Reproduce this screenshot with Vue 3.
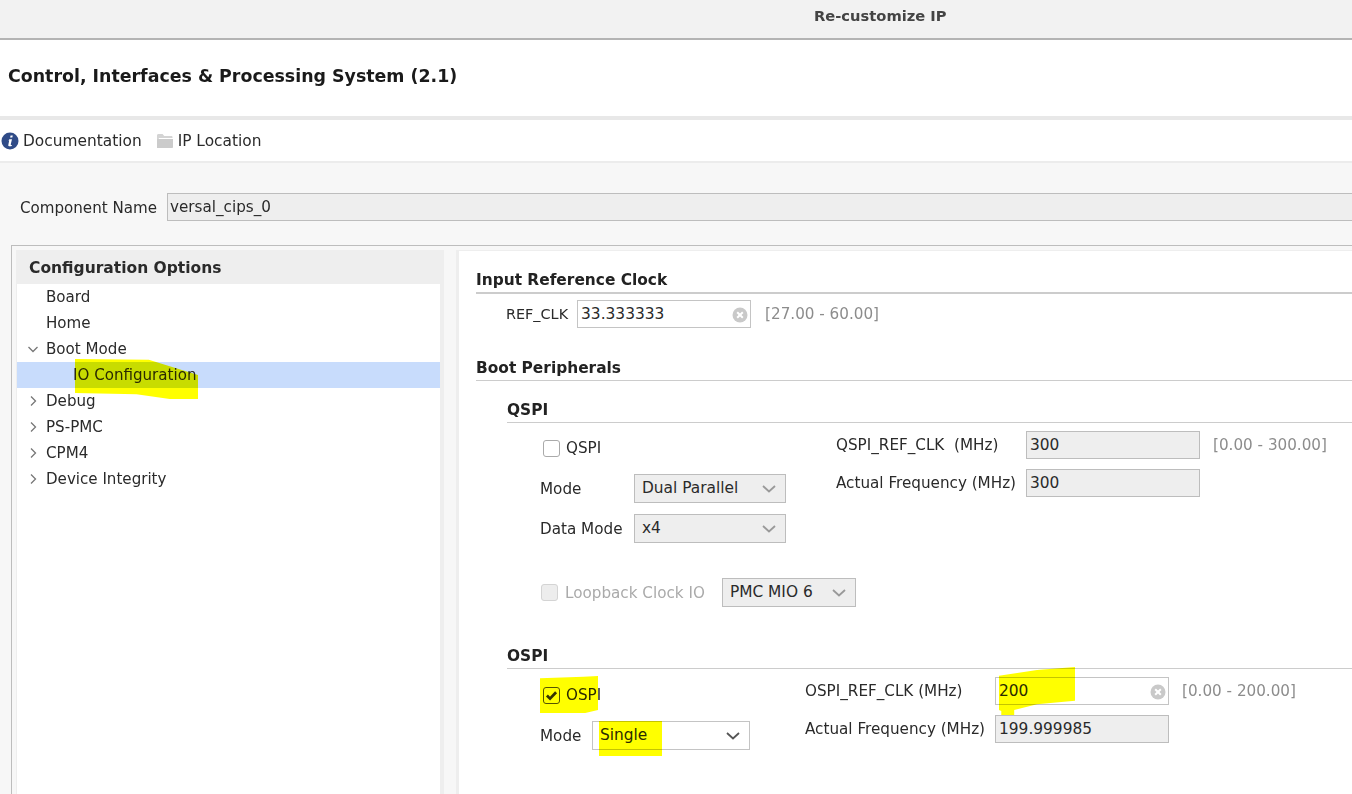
<template>
  <div class="window">
    <header class="titlebar">Re-customize IP</header>
    <div class="heading">Control, Interfaces &amp; Processing System (2.1)</div>
    <nav class="links">
      <span class="link">
        <svg class="link-icon" viewBox="0 0 18 18">
          <circle cx="9" cy="9" r="8.5" fill="#2f4b87" />
          <path d="M9.6 3.4h2.2l-.5 2.2H9.1zM8.4 7.2h2.6L9.7 12.6c-.1.5.3.6 1.2.3l-.2 1c-1.6.7-3.7.7-3.4-1l.9-4.5H7.4z" fill="#fff" />
        </svg>
        Documentation
      </span>
      <span class="link">
        <svg class="link-icon folder" viewBox="0 0 18 16">
          <path d="M1 2.5C1 1.7 1.6 1 2.4 1h4.2l1.6 2h7.4c.5 0 .9.4.9.9V5H3L1 11z" fill="#d4d4d4" />
          <path d="M1 15V7.2C1 6.5 1.5 6 2.2 6H17v8c0 .6-.5 1-1 1z" fill="#cbcbcb" />
        </svg>
        IP Location
      </span>
    </nav>

    <main class="body">
      <div class="name-row">
        <label>Component Name</label>
        <div class="name-input">versal_cips_0</div>
      </div>

      <div class="split">
        <aside class="options">
          <div class="options-title">Configuration Options</div>
          <ul class="tree">
            <li v-for="item in tree" :key="item.label" class="tree-row" :class="{ selected: item.selected, child: item.child }">
              <svg v-if="item.arrow" class="arrow" viewBox="0 0 12 12">
                <path :d="item.arrow === 'open' ? 'M1.5 4l4.5 4.5L10.5 4' : 'M4 1.5L8.5 6 4 10.5'" />
              </svg>
              {{ item.label }}
              <span v-if="item.selected" class="marker mark-tree"></span>
            </li>
          </ul>
        </aside>

        <section class="panel">
          <h3 class="group-title first">Input Reference Clock</h3>
          <div class="ref-row">
            <span class="ref-label">REF_CLK</span>
            <div class="field clearable ref-field">33.333333<span class="clear"><svg viewBox="0 0 16 16"><circle cx="8" cy="8" r="7.5" fill="#c9c9c9" /><path d="M5.2 5.2l5.6 5.6M10.8 5.2l-5.6 5.6" stroke="#fff" stroke-width="2" /></svg></span></div>
            <span class="range">[27.00 - 60.00]</span>
          </div>

          <h3 class="group-title boot">Boot Peripherals</h3>

          <div class="sub">
            <h4 class="sub-title">QSPI</h4>
            <div class="sub-body qspi-body">
              <div class="left-col">
                <div class="check-row">
                  <span class="check"></span>
                  <span>QSPI</span>
                </div>
                <div class="select-row qspi-mode">
                  <span class="select-label">Mode</span>
                  <div class="field select disabled">Dual Parallel<svg class="caret" viewBox="0 0 14 8"><path d="M1 1l6 5.5L13 1" /></svg></div>
                </div>
                <div class="select-row">
                  <span class="select-label">Data Mode</span>
                  <div class="field select disabled">x4<svg class="caret" viewBox="0 0 14 8"><path d="M1 1l6 5.5L13 1" /></svg></div>
                </div>
              </div>
              <div class="freq-col">
                <div class="freq-row">
                  <span class="freq-label">QSPI_REF_CLK&nbsp; (MHz)</span>
                  <div class="field freq-field disabled">300</div>
                  <span class="range wide">[0.00 - 300.00]</span>
                </div>
                <div class="freq-row">
                  <span class="freq-label">Actual Frequency (MHz)</span>
                  <div class="field freq-field disabled">300</div>
                </div>
              </div>
            </div>
            <div class="loopback">
              <span class="check off"></span>
              <span class="muted">Loopback Clock IO</span>
              <div class="field select mio disabled">PMC MIO 6<svg class="caret" viewBox="0 0 14 8"><path d="M1 1l6 5.5L13 1" /></svg></div>
            </div>
          </div>

          <div class="sub ospi">
            <h4 class="sub-title">OSPI</h4>
            <div class="sub-body ospi-body">
              <div class="left-col ospi-left">
                <div class="check-row ospi-check">
                  <span class="check on">
                    <svg viewBox="0 0 14 12"><path d="M2 6l3.4 3.4L12 2.4" /></svg>
                  </span>
                  <span>OSPI</span>
                  <span class="marker mark-check"></span>
                </div>
                <div class="select-row ospi-mode">
                  <span class="select-label short">Mode</span>
                  <div class="field select single">Single<svg class="caret dark" viewBox="0 0 14 8"><path d="M1 1l6 5.5L13 1" /></svg><span class="marker mark-single"></span></div>
                </div>
              </div>
              <div class="freq-col ospi-freq">
                <div class="freq-row">
                  <span class="freq-label">OSPI_REF_CLK (MHz)</span>
                  <div class="field clearable freq-field">200<span class="clear"><svg viewBox="0 0 16 16"><circle cx="8" cy="8" r="7.5" fill="#c9c9c9" /><path d="M5.2 5.2l5.6 5.6M10.8 5.2l-5.6 5.6" stroke="#fff" stroke-width="2" /></svg></span><span class="marker mark-200"></span></div>
                  <span class="range wide">[0.00 - 200.00]</span>
                </div>
                <div class="freq-row">
                  <span class="freq-label">Actual Frequency (MHz)</span>
                  <div class="field freq-field disabled">199.999985</div>
                </div>
              </div>
            </div>
          </div>
        </section>
      </div>
    </main>
  </div>
</template>

<script setup>
const tree = [
  { label: 'Board' },
  { label: 'Home' },
  { label: 'Boot Mode', arrow: 'open' },
  { label: 'IO Configuration', child: true, selected: true },
  { label: 'Debug', arrow: 'closed' },
  { label: 'PS-PMC', arrow: 'closed' },
  { label: 'CPM4', arrow: 'closed' },
  { label: 'Device Integrity', arrow: 'closed' }
];
</script>

<style>
html,
body {
  margin: 0;
  height: 100%;
  overflow: hidden;
  background: #fff;
}
</style>

<style scoped>
.window {
  width: 1352px;
  height: 794px;
  overflow: hidden;
  display: flex;
  flex-direction: column;
  font-family: "DejaVu Sans", sans-serif;
  font-size: 15.2px;
  color: #2a2a2a;
  background: #fff;
}

.titlebar {
  height: 38px;
  flex: none;
  padding-left: 814px;
  line-height: 32px;
  font-size: 14.7px;
  font-weight: 700;
  color: #444;
  background: #f2f2f2;
  border-bottom: 2px solid #b4b4b4;
}

.heading {
  height: 76px;
  flex: none;
  padding-left: 8px;
  line-height: 73px;
  font-size: 17.4px;
  font-weight: 700;
  color: #1a1a1a;
  border-bottom: 4px solid #e8e8e8;
}

.links {
  height: 41px;
  flex: none;
  display: flex;
  align-items: center;
  gap: 14px;
  padding-left: 1px;
  font-size: 15.4px;
  border-bottom: 2px solid #ececec;
}

.link {
  display: flex;
  align-items: center;
  gap: 4px;
}

.link-icon {
  width: 18px;
  height: 18px;
}

.link-icon.folder {
  height: 16px;
}

.body {
  flex: 1;
  min-height: 0;
  padding: 30px 0 0 11px;
  background: #f7f7f7;
}

.name-row {
  display: flex;
  align-items: center;
  height: 28px;
  padding-left: 9px;
  gap: 10px;
  font-size: 15.1px;
}

.name-row label {
  padding-top: 1px;
}

.name-input {
  flex: 1;
  height: 28px;
  box-sizing: border-box;
  padding-left: 2px;
  line-height: 27px;
  font-size: 15.2px;
  background: #eee;
  border: 1px solid #bdbdbd;
  border-right: none;
}

.split {
  display: flex;
  height: 560px;
  margin-top: 24px;
  padding: 4px 0 0 4px;
  gap: 12px;
  border: 1px solid #bdbdbd;
  border-right: none;
  border-bottom: none;
}

.options {
  width: 428px;
  flex: none;
  box-sizing: border-box;
  background: #fff;
  border-right: 4px solid #eee;
  border-left: 1px solid #eee;
}

.options-title {
  height: 34px;
  padding-left: 12px;
  line-height: 36px;
  font-size: 15.5px;
  font-weight: 700;
  background: #eee;
}

.tree {
  margin: 0;
  padding: 0;
  list-style: none;
}

.tree-row {
  position: relative;
  display: flex;
  align-items: center;
  box-sizing: border-box;
  height: 26px;
  padding: 0.5px 0 0 29px;
  font-size: 15.1px;
}

.tree-row.child {
  padding-left: 56px;
}

.tree-row.selected {
  background: #c8dcfc;
}

.arrow {
  position: absolute;
  left: 10px;
  top: 7px;
  width: 12px;
  height: 12px;
  fill: none;
  stroke: #777;
  stroke-width: 1.3;
}

.panel {
  flex: 1;
  min-width: 0;
  padding: 20px 0 0 17px;
  background: #fff;
  border-left: 3px solid #eee;
  border-top: 1px solid #eee;
}

.group-title {
  margin: 0;
  padding-bottom: 2px;
  height: 19px;
  line-height: 19px;
  font-size: 15.4px;
  font-weight: 700;
  color: #222;
  border-bottom: 1px solid #ccc;
}

.group-title.first {
  border-bottom-width: 2px;
}

.group-title.boot {
  margin-top: 31px;
}

.ref-row {
  display: flex;
  align-items: center;
  height: 28px;
  margin-top: 6px;
  padding-left: 30px;
  gap: 9px;
}

.ref-label {
  font-size: 14.4px;
}

.field {
  position: relative;
  box-sizing: border-box;
  height: 28px;
  padding-left: 3px;
  line-height: 27px;
  font-size: 15.4px;
  background: #fff;
  border: 1px solid #c4c4c4;
}

.field.disabled {
  background: #eee;
  border-color: #bdbdbd;
}

.ref-field {
  width: 174px;
  padding-left: 3px;
}

.clear {
  position: absolute;
  right: 2px;
  top: 6px;
  width: 16px;
  height: 16px;
}

.clear svg {
  display: block;
  width: 16px;
  height: 16px;
}

.range {
  margin-left: 5px;
  color: #8c8c8c;
}

.range.wide {
  margin-left: 13px;
}

.sub {
  padding-left: 31px;
}

.sub-title {
  margin: 0;
  margin-top: 20px;
  padding-bottom: 2px;
  height: 19px;
  line-height: 19px;
  font-size: 15.4px;
  font-weight: 700;
  color: #222;
  border-bottom: 1px solid #ccc;
}

.ospi .sub-title {
  margin-top: 40px;
}

.sub-body {
  display: flex;
}

.left-col {
  width: 329px;
  flex: none;
  padding-left: 33px;
  box-sizing: border-box;
}

.check-row {
  position: relative;
  display: flex;
  align-items: center;
  gap: 6px;
  padding-left: 3px;
  height: 26px;
  margin-top: 12px;
}

.check {
  display: flex;
  align-items: center;
  justify-content: center;
  width: 17px;
  height: 17px;
  box-sizing: border-box;
  flex: none;
  border: 1.5px solid #aaa;
  border-radius: 3px;
  background: #fff;
}

.check.off {
  background: #ededed;
  border-color: #d4d4d4;
}

.check.on {
  border-color: #555;
}

.check.on svg {
  width: 13px;
  height: 11px;
  fill: none;
  stroke: #333;
  stroke-width: 3;
}

.select-row {
  display: flex;
  align-items: center;
}

.qspi-mode {
  margin-top: 13px;
  margin-bottom: 11px;
}

.select-label {
  width: 94px;
  flex: none;
}

.select-label.short {
  width: 52px;
}

.select {
  width: 152px;
  height: 29px;
  padding-left: 7px;
  line-height: 27px;
}

.caret {
  position: absolute;
  right: 9px;
  top: 10px;
  width: 14px;
  height: 8px;
  fill: none;
  stroke: #999;
  stroke-width: 1.8;
}

.caret.dark {
  stroke: #555;
}

.freq-col {
  padding-top: 8px;
}

.freq-row {
  display: flex;
  align-items: center;
  height: 28px;
  margin-bottom: 10px;
}

.freq-label {
  width: 190px;
  flex: none;
}

.freq-field {
  width: 174px;
  padding-left: 3px;
}

.loopback {
  display: flex;
  align-items: center;
  height: 29px;
  margin-top: 35px;
  padding-left: 34px;
}

.loopback .muted {
  margin-left: 7px;
  color: #aaa;
}

.mio {
  width: 134px;
  margin-left: 17px;
}

.ospi-left {
  width: 298px;
}

.ospi-freq {
  padding-top: 8px;
}

.ospi-check {
  margin-top: 13px;
}

.ospi-mode {
  margin-top: 13px;
}

.single {
  width: 158px;
}

.marker {
  position: absolute;
  background: #ffff00;
  mix-blend-mode: multiply;
  pointer-events: none;
}

.mark-tree {
  left: 58px;
  top: -3px;
  width: 123px;
  height: 40px;
  clip-path: polygon(0 0, 60% 2%, 100% 40%, 100% 100%, 77% 100%, 50% 88%, 0 85%);
}

.mark-check {
  left: 0;
  top: -6px;
  width: 58px;
  height: 37px;
  clip-path: polygon(0 6%, 75% 2%, 100% 0, 100% 92%, 78% 100%, 0 100%);
}

.mark-single {
  left: 6px;
  top: -1px;
  width: 63px;
  height: 35px;
}

.mark-200 {
  left: 3px;
  top: -11px;
  width: 76px;
  height: 49px;
  clip-path: polygon(0 18%, 50% 6%, 100% 0, 100% 69%, 50% 76%, 20% 88%, 20% 100%, 3% 100%, 3% 90%, 0 88%);
}
</style>
